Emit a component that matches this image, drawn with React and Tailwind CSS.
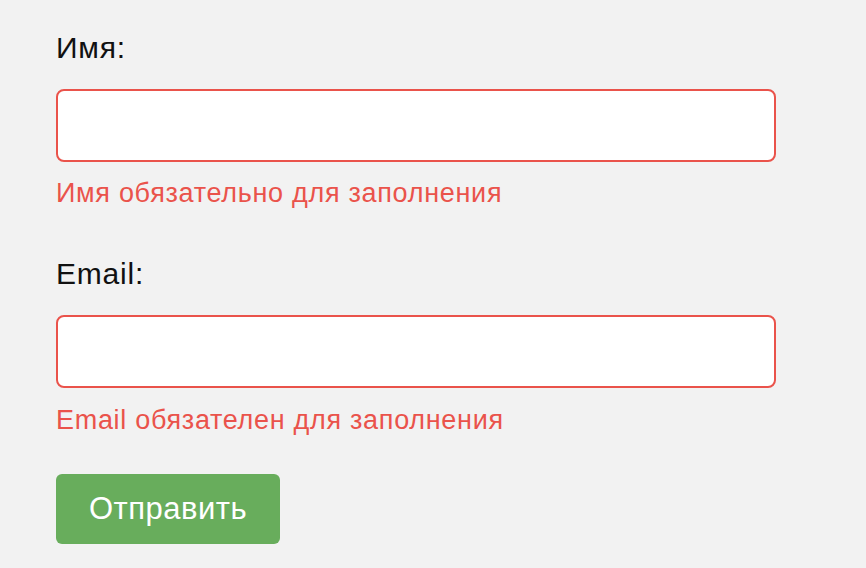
export default function App() {
  return (
    <div className="min-h-[568px] w-full bg-[#f2f2f2] pl-[56px] pt-[31px]" style={{ fontFamily: '"Liberation Sans", Arial, sans-serif' }}>
      <div className="flex w-[720px] flex-col">
        <label className="text-[30px] leading-[33px] tracking-[0.8px] text-[#111]">Имя:</label>
        <input className="mt-[25px] h-[73px] w-[720px] rounded-[8px] border-2 border-[#ea534b] bg-white outline-none" />
        <div className="mt-[16px] text-[27px] leading-[31px] tracking-[0.7px] text-[#ea534b]">Имя обязательно для заполнения</div>
        <label className="mt-[48px] text-[30px] leading-[33px] tracking-[0.8px] text-[#111]">Email:</label>
        <input className="mt-[25px] h-[73px] w-[720px] rounded-[8px] border-2 border-[#ea534b] bg-white outline-none" />
        <div className="mt-[17px] text-[27px] leading-[31px] tracking-[0.7px] text-[#ea534b]">Email обязателен для заполнения</div>
        <button className="mt-[38px] flex h-[70px] w-[224px] items-center justify-center rounded-[6px] bg-[#68ad5c] text-[31px] tracking-[0.5px] text-white">Отправить</button>
      </div>
    </div>
  );
}
